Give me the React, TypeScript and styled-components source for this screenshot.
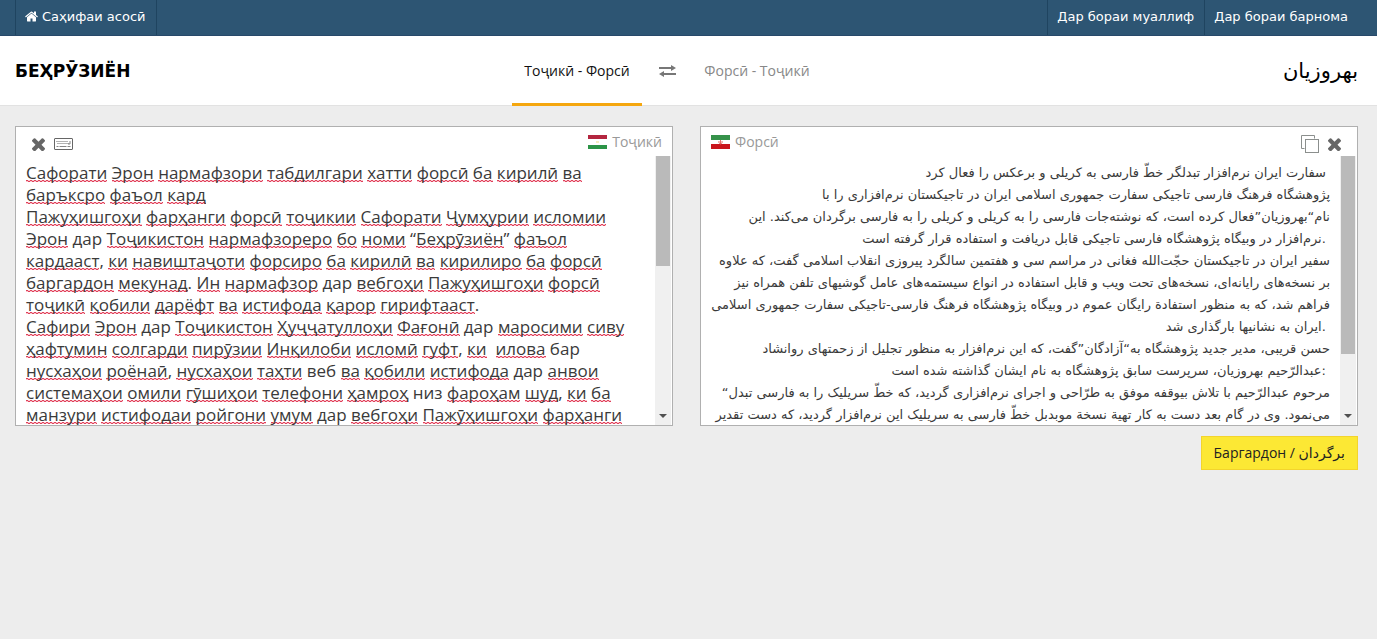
import React, { useState } from "react";
import styled, { createGlobalStyle } from "styled-components";

const Global = createGlobalStyle`
  *, *::before, *::after { box-sizing: border-box; }
  html, body { margin: 0; background: #ededed; }
  body { font-family: "Open Sans", "DejaVu Sans", sans-serif; font-size: 14px; color: #333; }
  button, textarea { font: inherit; color: inherit; margin: 0; padding: 0; border: 0; background: none; border-radius: 0; }
  button { cursor: pointer; }
  svg { display: block; flex: none; }
`;

const TopBar = styled.nav`
  display: flex;
  justify-content: space-between;
  height: 36px;
  padding: 0 19px 0 15px;
  background: #2d5573;
  border-bottom: 1px solid #28496a;
`;

const Menu = styled.div`
  display: flex;
`;

const MenuLink = styled.a<{ $closed?: boolean }>`
  display: flex;
  align-items: center;
  gap: 4px;
  padding: 0 10px 3px 9px;
  border-left: 1px solid #1f4460;
  border-right: ${(p) => (p.$closed ? "1px solid #1f4460" : "0")};
  color: #fff;
  font-family: "DejaVu Sans", sans-serif;
  font-size: 13px;
  text-decoration: none;
`;

const Header = styled.header`
  display: grid;
  grid-template-columns: 497fr auto 536fr;
  height: 70px;
  padding: 0 19px 0 15px;
  background: #fff;
  border-bottom: 1px solid #e2e2e2;
`;

const Brand = styled.h1<{ $end?: boolean }>`
  margin: 0;
  align-self: center;
  justify-self: ${(p) => (p.$end ? "end" : "start")};
  color: #000;
  font-family: "DejaVu Sans", sans-serif;
  font-size: ${(p) => (p.$end ? "21px" : "17px")};
  font-weight: ${(p) => (p.$end ? 400 : 700)};
`;

const Tabs = styled.div`
  display: flex;
`;

const Tab = styled.button<{ $active: boolean }>`
  width: 130px;
  height: 70px;
  padding-top: 2px;
  border-bottom: 3px solid ${(p) => (p.$active ? "#f5a70f" : "transparent")};
  color: ${(p) => (p.$active ? "#111" : "#888")};
`;

const Swap = styled.button`
  display: grid;
  place-items: center;
  width: 50px;
  color: #777;
`;

const Main = styled.main`
  display: flex;
  flex-direction: column;
  gap: 10px;
  padding: 20px 19px 20px 15px;
`;

const Columns = styled.div`
  display: grid;
  grid-template-columns: repeat(auto-fit, minmax(480px, 1fr));
  gap: 27px;
`;

const Panel = styled.section`
  display: flex;
  flex-direction: column;
  height: 300px;
  border: 1px solid #b0b0b0;
  background: #fff;
`;

const PanelHead = styled.div`
  display: flex;
  flex: none;
  justify-content: space-between;
  height: 29px;
  padding: 0 10px;
`;

const Language = styled.label`
  display: flex;
  align-items: center;
  gap: 5px;
  height: 29px;
  color: #999;
`;

const Tools = styled.div`
  display: flex;
  align-items: center;
  gap: 9px;
  height: 34px;
  padding: 0 6px;
  color: #666;
`;

const PanelBody = styled.div`
  display: flex;
  flex: 1;
  min-height: 0;
  padding-right: 1px;
`;

const Editor = styled.div<{ $persian?: boolean }>`
  display: grid;
  flex: 1;
  min-width: 0;
  overflow: hidden;
  color: #3a3a3a;
  font-size: ${(p) => (p.$persian ? "13px" : "17px")};
  font-family: ${(p) => (p.$persian ? '"DejaVu Sans", sans-serif' : '"Open Sans", sans-serif')};
  line-height: 22px;
  text-align: ${(p) => (p.$persian ? "right" : "left")};
`;

const Area = styled.textarea`
  grid-area: 1 / 1;
  position: relative;
  width: 100%;
  height: 100%;
  min-height: 0;
  padding: 6px 10px 0;
  overflow: hidden;
  resize: none;
  outline: 0;
  line-height: inherit;
  text-align: inherit;
  white-space: pre-wrap;
`;

const Marks = styled.div`
  grid-area: 1 / 1;
  height: 0;
  min-height: 0;
  padding: 6px 10px 0;
  color: transparent;
  white-space: pre-wrap;
  user-select: none;
`;

const Misspelt = styled.span`
  background-image:
    linear-gradient(90deg, #e0405a 2px, #f8c4cc 2px),
    linear-gradient(90deg, #f8c4cc 2px, #e0405a 2px);
  background-position: 0 19px, 0 20px;
  background-size: 4px 1px;
  background-repeat: repeat-x;
`;

const ScrollBar = styled.div`
  display: flex;
  flex: none;
  flex-direction: column;
  width: 16px;
  background: #f0f0f0;
`;

const Track = styled.div`
  flex: 1;
  padding: 0 1px;
`;

const Thumb = styled.div<{ $share: number }>`
  height: ${(p) => p.$share}%;
  background: #bababa;
`;

const ScrollDown = styled.button`
  display: grid;
  place-items: center;
  height: 19px;
  color: #505050;
`;

const Convert = styled.button`
  align-self: flex-end;
  height: 34px;
  padding: 0 12px 2px;
  border: 1px solid #f3d42c;
  background: #fce834;
  color: #222;
`;

const IconButton = styled.button`
  display: block;
`;

const HomeIcon = () => (
  <svg width="13" height="13" viewBox="64 128 1664 1536" fill="currentColor" aria-hidden="true">
    <path d="M1472 992v480q0 26-19 45t-45 19h-384v-384h-256v384h-384q-26 0-45-19t-19-45v-480q0-1 .5-3t.5-3l575-474 575 474q1 2 1 6zm223-69l-62 74q-8 9-21 11h-3q-13 0-21-7l-692-577-692 577q-12 8-24 7-13-2-21-11l-62-74q-8-10-7-23.5t11-21.5l719-599q32-26 76-26t76 26l244 204v-195q0-14 9-23t23-9h192q14 0 23 9t9 23v408l219 182q10 8 11 21.5t-7 23.5z" />
  </svg>
);

const CloseIcon = () => (
  <svg width="13" height="13" viewBox="302 344 1188 1188" fill="currentColor" aria-hidden="true">
    <path d="M1490 1322q0 40-28 68l-136 136q-28 28-68 28t-68-28l-294-294-294 294q-28 28-68 28t-68-28l-136-136q-28-28-28-68t28-68l294-294-294-294q-28-28-28-68t28-68l136-136q28-28 68-28t68 28l294 294 294-294q28-28 68-28t68 28l136 136q28 28 28 68t-28 68l-294 294 294 294q28 28 28 68z" />
  </svg>
);

const KeyboardIcon = () => (
  <svg width="19" height="12" viewBox="0 0 19 12" fill="none" stroke="currentColor" aria-hidden="true">
    <rect x="0.5" y="0.5" width="18" height="11" rx="0.5" />
    <path d="M2.5 3.5h12M3.5 5.5h11" strokeDasharray="1 1" />
    <path d="M2.5 8.5h2M5.5 8.5h7M13.5 8.5h3M16 3v3h-2" strokeWidth="0.8" />
  </svg>
);

const CopyIcon = () => (
  <svg width="18" height="18" viewBox="0 0 18 18" fill="none" stroke="#8b8f8d" aria-hidden="true">
    <path d="M3.500 13.500h-3v-13h13v3" />
    <rect x="4.500" y="4.500" width="13" height="13" />
  </svg>
);

const SwapIcon = () => (
  <svg width="17" height="12" viewBox="0 0 17 12" aria-hidden="true">
    <path d="M0 2h12V0L17 3 12 6V4H0zM17 8H5V6L0 9 5 12V10h12z" fill="currentColor" />
  </svg>
);

const ArrowIcon = () => (
  <svg width="8" height="4" viewBox="0 0 8 4" aria-hidden="true">
    <path d="M0 0h8L4 4z" fill="currentColor" />
  </svg>
);

const TajikFlag = () => (
  <svg width="19" height="14" viewBox="0 0 19 14" aria-hidden="true">
    <path fill="#fff" d="M0 0h19v14H0z" />
    <path fill="#b3263f" d="M0 0h19v4H0z" />
    <path fill="#2c9447" d="M0 10h19v4H0z" />
    <path fill="#f6eec0" d="M8 6h3v2H8z" />
  </svg>
);

const IranFlag = () => (
  <svg width="19" height="14" viewBox="0 0 19 14" aria-hidden="true">
    <path fill="#fff" d="M0 0h19v14H0z" />
    <path fill="#36924a" d="M0 0h19v5H0z" />
    <path fill="#c9151c" d="M0 9h19v5H0z" />
    <path d="M9.500 5v4.500M8 6q-1 2 1.500 3M11 6q1 2-1.500 3" stroke="#dd4a45" strokeWidth="0.8" fill="none" />
  </svg>
);

const tajikText = [
  "Сафорати Эрон нармафзори табдилгари хатти форсӣ ба кирилӣ ва",
  "баръксро фаъол кард",
  "Пажуҳишгоҳи фарҳанги форсӣ тоҷикии Сафорати Ҷумҳурии исломии",
  "Эрон дар Тоҷикистон нармафзореро бо номи “Беҳрӯзиён” фаъол",
  "кардааст, ки навиштаҷоти форсиро ба кирилӣ ва кирилиро ба форсӣ",
  "баргардон мекунад. Ин нармафзор дар вебгоҳи Пажуҳишгоҳи форсӣ",
  "тоҷикӣ қобили дарёфт ва истифода қарор гирифтааст.",
  "Сафири Эрон дар Тоҷикистон Ҳуҷҷатуллоҳи Фағонӣ дар маросими сиву",
  "ҳафтумин солгарди пирӯзии Инқилоби исломӣ гуфт, ки  илова бар",
  "нусхаҳои роёнаӣ, нусхаҳои таҳти веб ва қобили истифода дар анвои",
  "системаҳои омили гӯшиҳои телефони ҳамроҳ низ фароҳам шуд, ки ба",
  "манзури истифодаи ройгони умум дар вебгоҳи Пажӯҳишгоҳи фарҳанги",
].join("\n");

const persianText = [
  "سفارت ایران نرم‌افزار تبدلگر خطّ فارسی به کریلی و برعکس را فعال کرد ",
  "پژوهشگاه فرهنگ فارسی تاجیکی سفارت جمهوری اسلامی ایران در تاجیکستان نرم‌افزاری را با",
  "نام“بهروزیان”فعال کرده است، که نوشته‌جات فارسی را به کریلی و کریلی را به فارسی برگردان می‌کند. این",
  "نرم‌افزار در وبیگاه پژوهشگاه فارسی تاجیکی قابل دریافت و استفاده قرار گرفته است. ",
  "سفیر ایران در تاجیکستان حجّت‌الله فغانی در مراسم سی و هفتمین سالگرد پیروزی انقلاب اسلامی گفت، که علاوه",
  "بر نسخه‌های رایانه‌ای، نسخه‌های تحت ویب و قابل استفاده در انواع سیستمه‌های عامل گوشیهای تلفن همراه نیز",
  "فراهم شد، که به منظور استفادة رایگان عموم در وبیگاه پژوهشگاه فرهنگ فارسی-تاجیکی سفارت جمهوری اسلامی",
  "ایران به نشانیها بارگذاری شد. ",
  "حسن قریبی، مدیر جدید پژوهشگاه به“آزادگان”گفت، که این نرم‌افزار به منظور تجلیل از زحمتهای روانشاد",
  "عبدالرّحیم بهروزیان، سرپرست سابق پژوهشگاه به نام ایشان گذاشته شده است: ",
  "مرحوم عبدالرّحیم با تلاش بیوقفه موفق به طرّاحی و اجرای نرم‌افزاری گردید، که خطّ سریلیک را به فارسی تبدل“\u200f",
  "می‌نمود. وی در گام بعد دست به کار تهیة نسخة موبدبل خطّ فارسی به سریلیک این نرم‌افزار گردید، که دست تقدیر",
].join("\n");

const dictionary = new Set(["дар", "бар", "веб", "низ"]);

const SpellMarks = ({ text }: { text: string }) => (
  <Marks aria-hidden="true">
    {text.split(/([\p{L}\p{M}]+)/u).map((part, i) =>
      i % 2 === 1 && !dictionary.has(part) ? <Misspelt key={i}>{part}</Misspelt> : part
    )}
  </Marks>
);

const Scroll = ({ share }: { share: number }) => (
  <ScrollBar>
    <Track>
      <Thumb $share={share} />
    </Track>
    <ScrollDown type="button" aria-label="Поён">
      <ArrowIcon />
    </ScrollDown>
  </ScrollBar>
);

export default function App() {
  const [toPersian, setToPersian] = useState(true);
  const [tajik, setTajik] = useState(tajikText);
  const [persian, setPersian] = useState(persianText);

  return (
    <>
      <Global />
      <TopBar>
        <Menu>
          <MenuLink href="#" $closed>
            <HomeIcon />
            Саҳифаи асосӣ
          </MenuLink>
        </Menu>
        <Menu>
          <MenuLink href="#author">Дар бораи муаллиф</MenuLink>
          <MenuLink href="#about">Дар бораи барнома</MenuLink>
        </Menu>
      </TopBar>
      <Header>
        <Brand>БЕҲРӮЗИЁН</Brand>
        <Tabs>
          <Tab type="button" $active={toPersian} onClick={() => setToPersian(true)}>
            Тоҷикӣ - Форсӣ
          </Tab>
          <Swap type="button" aria-label="Иваз" onClick={() => setToPersian(!toPersian)}>
            <SwapIcon />
          </Swap>
          <Tab type="button" $active={!toPersian} onClick={() => setToPersian(false)}>
            Форсӣ - Тоҷикӣ
          </Tab>
        </Tabs>
        <Brand as="h2" $end lang="fa">
          بهروزیان
        </Brand>
      </Header>
      <Main>
        <Columns>
          <Panel>
            <PanelHead>
              <Tools>
                <IconButton type="button" aria-label="Тоза кардан" onClick={() => setTajik("")}>
                  <CloseIcon />
                </IconButton>
                <IconButton type="button" aria-label="Клавиатура">
                  <KeyboardIcon />
                </IconButton>
              </Tools>
              <Language htmlFor="tajik">
                <TajikFlag />
                Тоҷикӣ
              </Language>
            </PanelHead>
            <PanelBody>
              <Editor>
                <SpellMarks text={tajik} />
                <Area id="tajik" spellCheck={false} value={tajik} onChange={(e) => setTajik(e.target.value)} />
              </Editor>
              <Scroll share={44} />
            </PanelBody>
          </Panel>
          <Panel>
            <PanelHead>
              <Language htmlFor="persian">
                <IranFlag />
                Форсӣ
              </Language>
              <Tools>
                <IconButton type="button" aria-label="Нусха">
                  <CopyIcon />
                </IconButton>
                <IconButton type="button" aria-label="Тоза кардан" onClick={() => setPersian("")}>
                  <CloseIcon />
                </IconButton>
              </Tools>
            </PanelHead>
            <PanelBody>
              <Editor $persian>
                <Area
                  id="persian"
                  lang="fa"
                  spellCheck={false}
                  value={persian}
                  onChange={(e) => setPersian(e.target.value)}
                />
              </Editor>
              <Scroll share={79} />
            </PanelBody>
          </Panel>
        </Columns>
        <Convert type="button">Баргардон / برگردان</Convert>
      </Main>
    </>
  );
}
